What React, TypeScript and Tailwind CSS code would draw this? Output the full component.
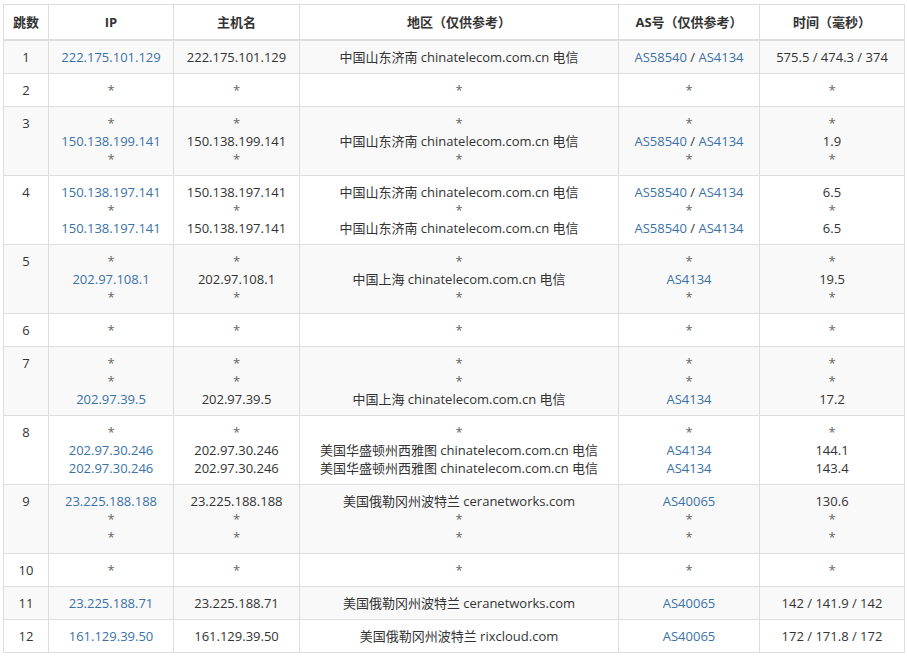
import React from "react";

type Cell = string[];
const L = (s: string) => "@" + s;
const rows: { n: number; ip: Cell; host: Cell; reg: Cell; as: Cell; t: Cell }[] = [
  { n: 1, ip: [L("222.175.101.129")], host: ["222.175.101.129"], reg: ["中国山东济南 chinatelecom.com.cn 电信"], as: ["AS"], t: ["575.5 / 474.3 / 374"] },
  { n: 2, ip: ["*"], host: ["*"], reg: ["*"], as: ["*"], t: ["*"] },
  { n: 3, ip: ["*", L("150.138.199.141"), "*"], host: ["*", "150.138.199.141", "*"], reg: ["*", "中国山东济南 chinatelecom.com.cn 电信", "*"], as: ["*", "AS", "*"], t: ["*", "1.9", "*"] },
  { n: 4, ip: [L("150.138.197.141"), "*", L("150.138.197.141")], host: ["150.138.197.141", "*", "150.138.197.141"], reg: ["中国山东济南 chinatelecom.com.cn 电信", "*", "中国山东济南 chinatelecom.com.cn 电信"], as: ["AS", "*", "AS"], t: ["6.5", "*", "6.5"] },
  { n: 5, ip: ["*", L("202.97.108.1"), "*"], host: ["*", "202.97.108.1", "*"], reg: ["*", "中国上海 chinatelecom.com.cn 电信", "*"], as: ["*", L("AS4134"), "*"], t: ["*", "19.5", "*"] },
  { n: 6, ip: ["*"], host: ["*"], reg: ["*"], as: ["*"], t: ["*"] },
  { n: 7, ip: ["*", "*", L("202.97.39.5")], host: ["*", "*", "202.97.39.5"], reg: ["*", "*", "中国上海 chinatelecom.com.cn 电信"], as: ["*", "*", L("AS4134")], t: ["*", "*", "17.2"] },
  { n: 8, ip: ["*", L("202.97.30.246"), L("202.97.30.246")], host: ["*", "202.97.30.246", "202.97.30.246"], reg: ["*", "美国华盛顿州西雅图 chinatelecom.com.cn 电信", "美国华盛顿州西雅图 chinatelecom.com.cn 电信"], as: ["*", L("AS4134"), L("AS4134")], t: ["*", "144.1", "143.4"] },
  { n: 9, ip: [L("23.225.188.188"), "*", "*"], host: ["23.225.188.188", "*", "*"], reg: ["美国俄勒冈州波特兰 ceranetworks.com", "*", "*"], as: [L("AS40065"), "*", "*"], t: ["130.6", "*", "*"] },
  { n: 10, ip: ["*"], host: ["*"], reg: ["*"], as: ["*"], t: ["*"] },
  { n: 11, ip: [L("23.225.188.71")], host: ["23.225.188.71"], reg: ["美国俄勒冈州波特兰 ceranetworks.com"], as: [L("AS40065")], t: ["142 / 141.9 / 142"] },
  { n: 12, ip: [L("161.129.39.50")], host: ["161.129.39.50"], reg: ["美国俄勒冈州波特兰 rixcloud.com"], as: [L("AS40065")], t: ["172 / 171.8 / 172"] },
];

const link = "text-[#3a72a8]";
function Lines({ c }: { c: Cell }) {
  return (
    <>
      {c.map((s, i) => (
        <div key={i} className="h-[18px]">
          {s === "AS" ? (
            <span><span className={link}>AS58540</span> / <span className={link}>AS4134</span></span>
          ) : s.startsWith("@") ? (
            <span className={link}>{s.slice(1)}</span>
          ) : s === "*" ? (
            <span className="text-[#666]">*</span>
          ) : (
            s
          )}
        </div>
      ))}
    </>
  );
}

export default function App() {
  const td = "border border-[#ddd] px-2 py-[7px] align-top text-center";
  return (
    <div className="bg-white w-[907px] h-[658px] pl-[3px] pt-[4px] text-[13px] leading-[18px] text-[#333]" style={{ fontFamily: '"Open Sans","Noto Sans CJK SC",sans-serif' }}>
      <table className="border-collapse w-[901px] table-fixed">
        <colgroup>
          <col className="w-[45px]" />
          <col className="w-[125px]" />
          <col className="w-[126px]" />
          <col className="w-[319px]" />
          <col className="w-[141px]" />
          <col className="w-[145px]" />
        </colgroup>
        <thead>
          <tr className="h-[35px]">
            {["跳数", "IP", "主机名", "地区（仅供参考）", "AS号（仅供参考）", "时间（毫秒）"].map((h) => (
              <th key={h} className="border border-[#ddd] border-b-2 font-bold text-center px-1 py-0 align-middle">{h}</th>
            ))}
          </tr>
        </thead>
        <tbody>
          {rows.map((r) => (
            <tr key={r.n} className={r.n % 2 === 1 ? "bg-[#f9f9f9]" : "bg-white"}>
              <td className={td}>{r.n}</td>
              <td className={td}><Lines c={r.ip} /></td>
              <td className={td}><Lines c={r.host} /></td>
              <td className={td + " whitespace-nowrap"}><Lines c={r.reg} /></td>
              <td className={td}><Lines c={r.as} /></td>
              <td className={td}><Lines c={r.t} /></td>
            </tr>
          ))}
        </tbody>
      </table>
    </div>
  );
}
